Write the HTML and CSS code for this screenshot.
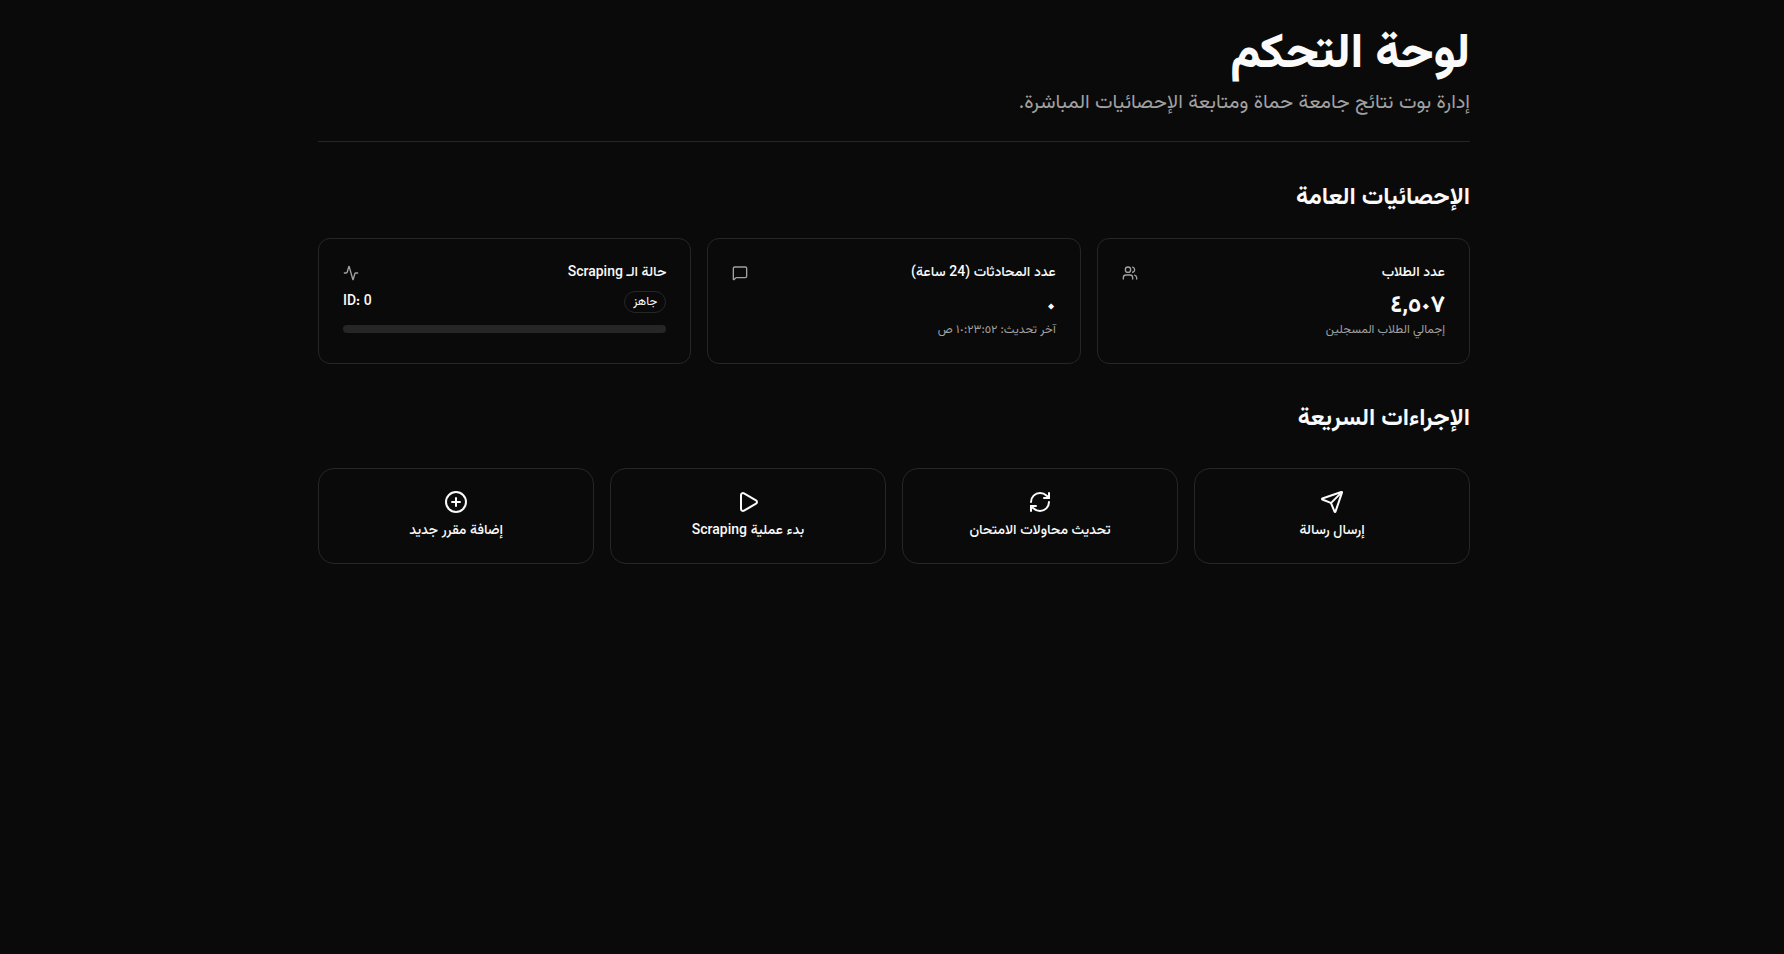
FILE: index.html
```html
<!DOCTYPE html>
<html lang="ar" dir="rtl">

<head>
    <meta charset="UTF-8">
    <meta name="viewport" content="width=device-width, initial-scale=1.0">
    <title>لوحة التحكم</title>

    <link rel="stylesheet" href="styles.css">
</head>

<body>

    <main class="container">

        <!-- HEADER -->
        <header class="page__header">
            <h1 class="page__title">لوحة التحكم</h1>
            <p class="page__subtitle">إدارة بوت نتائج جامعة حماة ومتابعة الإحصائيات المباشرة.</p>
        </header>

        <!-- STATS -->
        <section class="section section--stats">
            <h2 class="section__title">الإحصائيات العامة</h2>
            <div class="stats__grid">

                <div class="stat__card">
                    <div class="stat__head">
                        <span class="stat__label">عدد الطلاب</span>
                        <svg class="stat__icon" viewBox="0 0 24 24">
                            <path d="M16 21v-2a4 4 0 0 0-4-4H6a4 4 0 0 0-4 4v2"/>
                            <circle cx="9" cy="7" r="4"/>
                            <path d="M22 21v-2a4 4 0 0 0-3-3.87"/>
                            <path d="M16 3.128a4 4 0 0 1 0 7.744"/>
                        </svg>
                    </div>
                    <div class="stat__value">٤,٥٠٧</div>
                    <div class="stat__note">إجمالي الطلاب المسجلين</div>
                </div>

                <div class="stat__card">
                    <div class="stat__head">
                        <span class="stat__label">عدد المحادثات (24 ساعة)</span>
                        <svg class="stat__icon" viewBox="0 0 24 24">
                            <path d="M22 17a2 2 0 0 1-2 2H6.828a2 2 0 0 0-1.414.586l-2.202 2.202A.71.71 0 0 1 2 21.286V5a2 2 0 0 1 2-2h16a2 2 0 0 1 2 2z"/>
                        </svg>
                    </div>
                    <div class="stat__value">٠</div>
                    <div class="stat__note">آخر تحديث: ١٠:٢٣:٥٢ ص</div>
                </div>

                <div class="stat__card">
                    <div class="stat__head">
                        <span class="stat__label">حالة الـ Scraping</span>
                        <svg class="stat__icon" viewBox="0 0 24 24">
                            <path d="M22 12h-2.48a2 2 0 0 0-1.93 1.46l-2.35 8.36a.25.25 0 0 1-.48 0L9.24 2.18a.25.25 0 0 0-.48 0l-2.35 8.36A2 2 0 0 1 4.49 12H2"/>
                        </svg>
                    </div>
                    <div class="stat__status">
                        <span class="stat__badge">جاهز</span>
                        <span class="stat__id" dir="ltr">ID: 0</span>
                    </div>
                    <div class="stat__progress"></div>
                </div>

            </div>
        </section>

        <!-- ACTIONS -->
        <section class="section section--actions">
            <h2 class="section__title">الإجراءات السريعة</h2>
            <div class="actions__grid">

                <button class="action__card">
                    <svg class="action__icon" viewBox="0 0 24 24">
                        <path d="M14.536 21.686a.5.5 0 0 0 .937-.024l6.5-19a.496.496 0 0 0-.635-.635l-19 6.5a.5.5 0 0 0-.024.937l7.93 3.18a2 2 0 0 1 1.112 1.11z"/>
                        <path d="m21.854 2.147-10.94 10.939"/>
                    </svg>
                    <span>إرسال رسالة</span>
                </button>

                <button class="action__card">
                    <svg class="action__icon" viewBox="0 0 24 24">
                        <path d="M3 12a9 9 0 0 1 9-9 9.75 9.75 0 0 1 6.74 2.74L21 8"/>
                        <path d="M21 3v5h-5"/>
                        <path d="M21 12a9 9 0 0 1-9 9 9.75 9.75 0 0 1-6.74-2.74L3 16"/>
                        <path d="M8 16H3v5"/>
                    </svg>
                    <span>تحديث محاولات الامتحان</span>
                </button>

                <button class="action__card">
                    <svg class="action__icon" viewBox="0 0 24 24">
                        <path d="M5 5a2 2 0 0 1 3.008-1.728l11.997 6.998a2 2 0 0 1 .003 3.458l-12 7A2 2 0 0 1 5 19z"/>
                    </svg>
                    <span>بدء عملية Scraping</span>
                </button>

                <button class="action__card">
                    <svg class="action__icon" viewBox="0 0 24 24">
                        <circle cx="12" cy="12" r="10"/>
                        <path d="M8 12h8"/>
                        <path d="M12 8v8"/>
                    </svg>
                    <span>إضافة مقرر جديد</span>
                </button>

            </div>
        </section>

    </main>

</body>
</html>
```

FILE: styles.css
```css
* {
    box-sizing: border-box;
}

body {
    margin: 0;
    padding-left: 4px;
    min-height: 954px;
    background-color: #0a0a0a;
    color: #fafafa;
    font-family: Vazirmatn, Roboto, sans-serif;
}

.container {
    max-width: 1152px;
    margin: 0 auto;
    padding-top: 32px;
}

/* Header */

.page__header {
    padding-bottom: 24px;
    border-bottom: 1px solid #262626;
}

.page__title {
    margin: 0;
    font-size: 48px;
    line-height: 48px;
    font-weight: 800;
}

.page__subtitle {
    margin: 9px 0 0;
    font-size: 20px;
    line-height: 28px;
    color: #a1a1a1;
}

/* Sections */

.section--stats {
    margin-top: 40px;
}

.section--actions {
    margin-top: 39px;
}

.section--actions .section__title {
    margin-bottom: 33px;
}

.section__title {
    margin: 0 0 24px;
    font-size: 24px;
    line-height: 32px;
    font-weight: 700;
}

/* Stat cards */

.stats__grid {
    display: grid;
    grid-template-columns: repeat(3, 1fr);
    gap: 16px;
}

.stat__card {
    height: 126px;
    padding: 24px;
    border: 1px solid #262626;
    border-radius: 12px;
}

.stat__head {
    display: flex;
    justify-content: space-between;
    align-items: center;
    height: 20px;
}

.stat__label {
    font-size: 14px;
    font-weight: 500;
}

.stat__icon {
    width: 16px;
    height: 16px;
    fill: none;
    stroke: #a1a1a1;
    stroke-width: 2;
    stroke-linecap: round;
    stroke-linejoin: round;
}

.stat__value {
    margin-top: 7px;
    font-size: 24px;
    line-height: 32px;
    font-weight: 700;
}

.stat__note {
    font-size: 12px;
    line-height: 16px;
    color: #a1a1a1;
}

.stat__status {
    display: flex;
    justify-content: space-between;
    align-items: center;
    margin-top: 7px;
    height: 24px;
}

.stat__badge {
    padding: 2px 8px;
    border: 1px solid #262626;
    border-radius: 999px;
    font-size: 12px;
    line-height: 16px;
    font-weight: 400;
}

.stat__id {
    font-size: 14px;
    font-weight: 500;
}

.stat__progress {
    height: 8px;
    margin-top: 11px;
    background-color: #262626;
    border-radius: 999px;
}

/* Action cards */

.actions__grid {
    display: grid;
    grid-template-columns: repeat(4, 1fr);
    gap: 16px;
}

.action__card {
    display: flex;
    flex-direction: column;
    align-items: center;
    justify-content: center;
    gap: 7px;
    height: 96px;
    padding: 0 0 2px;
    background: transparent;
    border: 1px solid #262626;
    border-radius: 16px;
    color: #fafafa;
    font-family: inherit;
    font-size: 14px;
    line-height: 20px;
    font-weight: 500;
}

.action__icon {
    width: 24px;
    height: 24px;
    fill: none;
    stroke: currentColor;
    stroke-width: 2;
    stroke-linecap: round;
    stroke-linejoin: round;
}
```
